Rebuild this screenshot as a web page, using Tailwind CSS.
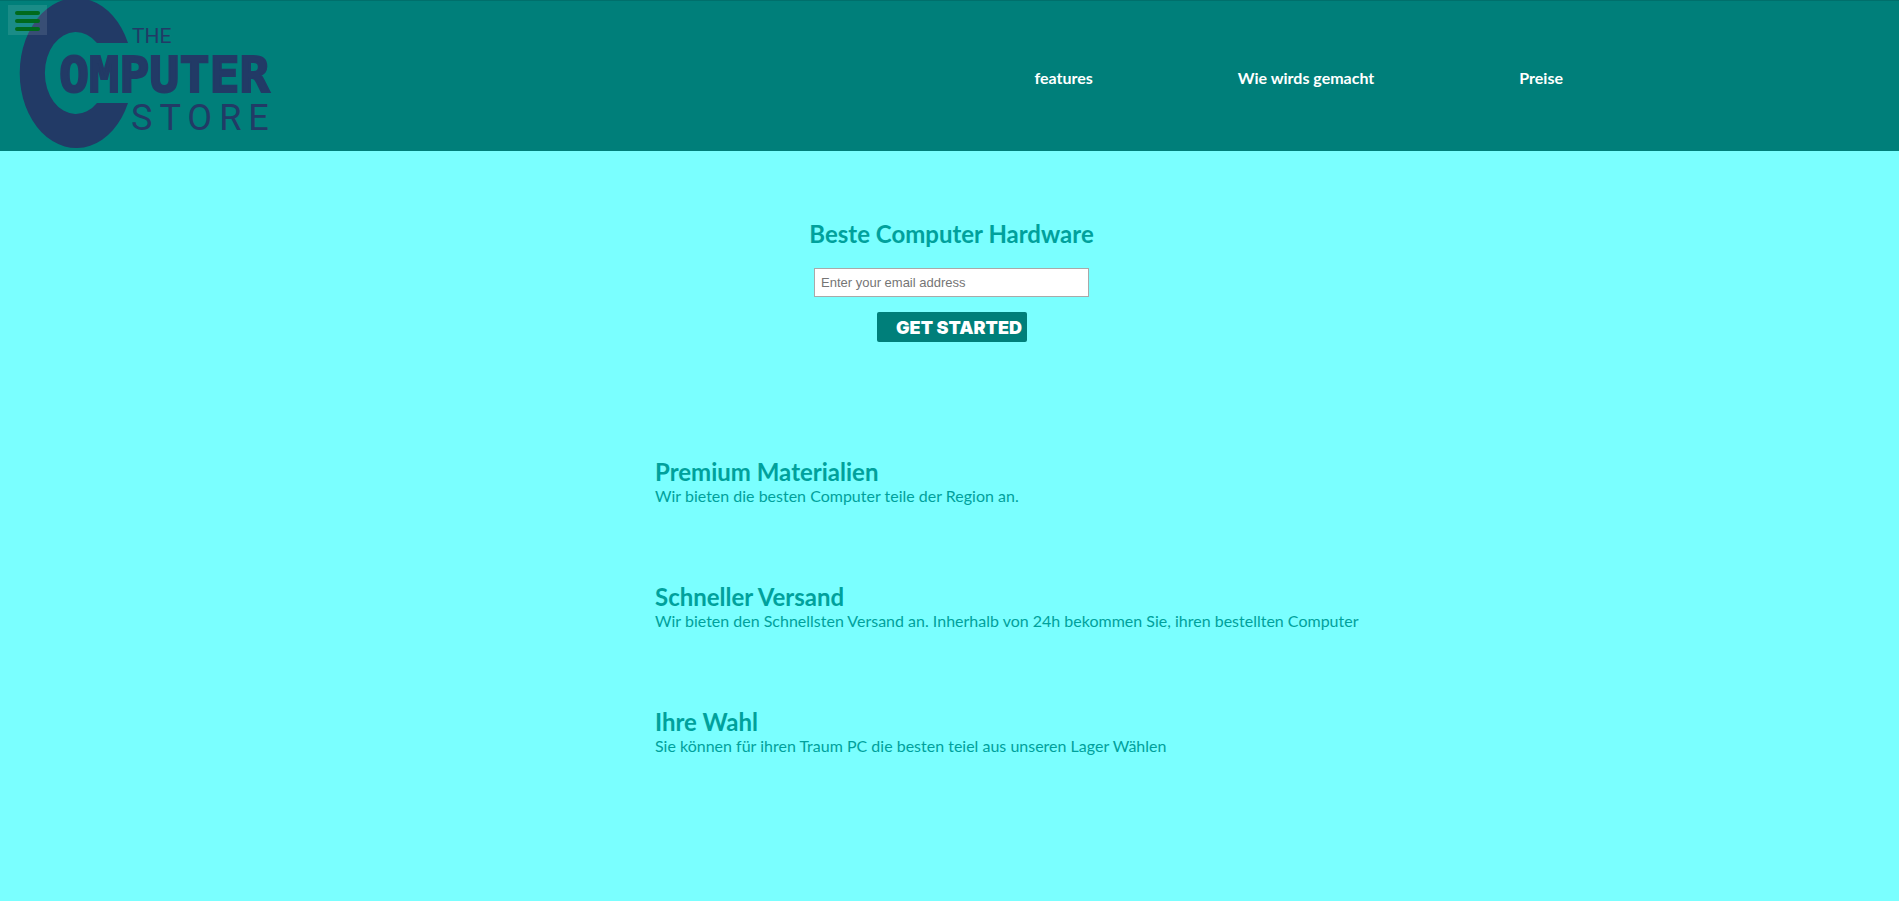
<!DOCTYPE html>
<html lang="de">
<head>
<meta charset="utf-8">
<meta name="viewport" content="width=device-width, initial-scale=1">
<title>The Computer Store</title>
<script src="https://cdn.jsdelivr.net/npm/@tailwindcss/browser@4"></script>
</head>
<body class="min-h-screen bg-[#7affff] font-['Lato',sans-serif] text-base text-[#00a19c]">
<header class="relative flex h-[151px] items-start justify-between border-t border-[#006f6b] bg-[#007f7a]">
  <a href="#" aria-label="The Computer Store" class="ml-5 -mt-px">
    <svg width="260" height="150" viewBox="20 0 260 150" fill="#223a66" class="block overflow-visible font-['Roboto',sans-serif]">
      <path d="M128 43A56.500 75 0 1 0 128 103H97A31 41 0 1 1 97 43Z"/>
      <text x="132" y="43" font-size="21">THE</text>
      <text x="59" y="92" font-size="50" font-weight="700" stroke="#223a66" stroke-width="2" class="font-['DejaVu_Sans_Mono',monospace]">OMPUTER</text>
      <text x="131" y="130" font-size="36" letter-spacing="7">STORE</text>
    </svg>
  </a>
  <button type="button" aria-label="Menü" class="absolute left-2 top-1 flex h-[30px] w-[39px] flex-col items-center justify-center gap-1 bg-white/10 pt-0.5">
    <span class="h-1 w-[25px] rounded-full bg-[#006a1c]"></span>
    <span class="h-1 w-[25px] rounded-full bg-[#006a1c]"></span>
    <span class="h-1 w-[25px] rounded-full bg-[#006a1c]"></span>
  </button>
  <nav class="mr-[336px] mt-[65px]">
    <ul class="flex gap-[145px] font-bold text-white">
      <li><a href="#features">features</a></li>
      <li><a href="#how">Wie wirds gemacht</a></li>
      <li><a href="#preise">Preise</a></li>
    </ul>
  </nav>
</header>
<main>
  <form class="flex flex-col items-center pl-1 pt-[67px]">
    <h2 class="text-2xl font-bold">Beste Computer Hardware</h2>
    <input type="email" aria-label="Enter your email address" placeholder="Enter your email address" class="mt-[18px] h-[29px] w-[275px] border border-[#a9a9a9] bg-white px-1.5 font-['Liberation_Sans',sans-serif] text-[13px] placeholder:text-[#757575]">
    <button type="submit" class="mt-[15px] h-[30px] w-[150px] rounded-xs bg-[#007f7a] pl-[15px] pt-0.5 font-['Inter',sans-serif] text-lg leading-6 font-black text-white">GET STARTED</button>
  </form>
  <section id="features" class="ml-[655px] mt-[114px] flex flex-col gap-[73px]">
    <article><h2 class="text-2xl font-bold">Premium Materialien</h2><p class="-mt-1 leading-6">Wir bieten die besten Computer teile der Region an.</p></article>
    <article><h2 class="text-2xl font-bold">Schneller Versand</h2><p class="-mt-1 leading-6">Wir bieten den Schnellsten Versand an. Inherhalb von 24h bekommen Sie, ihren bestellten Computer</p></article>
    <article><h2 class="text-2xl font-bold">Ihre Wahl</h2><p class="-mt-1 leading-6">Sie können für ihren Traum PC die besten teiel aus unseren Lager Wählen</p></article>
  </section>
</main>
</body>
</html>
